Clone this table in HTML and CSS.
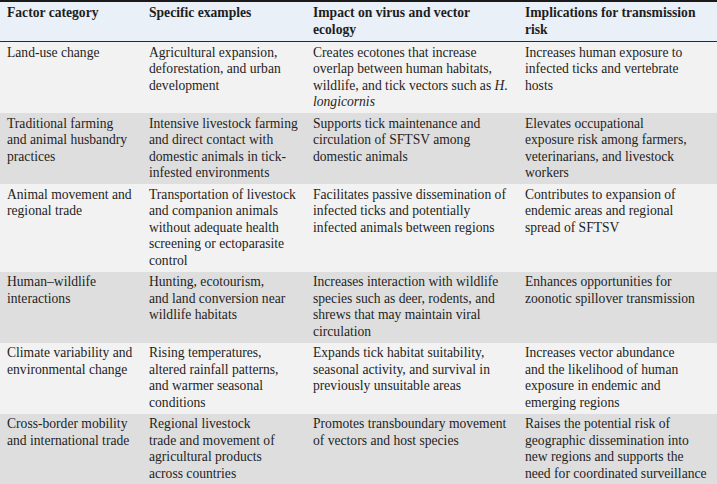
FILE: index.html
```html
<!DOCTYPE html>
<html lang="en">
<head>
<meta charset="utf-8">
<title>Factors</title>
<link rel="stylesheet" href="styles.css">
</head>
<body>
<table class="factors">
  <colgroup>
    <col class="c1"><col class="c2"><col class="c3"><col class="c4">
  </colgroup>
  <thead>
    <tr>
      <th>Factor category</th>
      <th>Specific examples</th>
      <th>Impact on virus and vector ecology</th>
      <th>Implications for transmission risk</th>
    </tr>
  </thead>
  <tbody>
    <tr>
      <td>Land-use change</td>
      <td>Agricultural expansion, deforestation, and urban development</td>
      <td>Creates ecotones that increase overlap between human habitats, wildlife, and tick vectors such as <i>H. longicornis</i></td>
      <td>Increases human exposure to<br>infected ticks and vertebrate<br>hosts</td>
    </tr>
    <tr>
      <td>Traditional farming and animal husbandry practices</td>
      <td>Intensive livestock farming and direct contact with domestic animals in tick-infested environments</td>
      <td>Supports tick maintenance and circulation of SFTSV among domestic animals</td>
      <td>Elevates occupational<br>exposure risk among farmers,<br>veterinarians, and livestock<br>workers</td>
    </tr>
    <tr>
      <td>Animal movement and regional trade</td>
      <td>Transportation of livestock and companion animals without adequate health screening or ectoparasite control</td>
      <td>Facilitates passive dissemination of infected ticks and potentially infected animals between regions</td>
      <td>Contributes to expansion of endemic areas and regional spread of SFTSV</td>
    </tr>
    <tr>
      <td>Human–wildlife interactions</td>
      <td>Hunting, ecotourism,<br>and land conversion near<br>wildlife habitats</td>
      <td>Increases interaction with wildlife species such as deer, rodents, and shrews that may maintain viral circulation</td>
      <td>Enhances opportunities for zoonotic spillover transmission</td>
    </tr>
    <tr>
      <td>Climate variability and environmental change</td>
      <td>Rising temperatures, altered rainfall patterns, and warmer seasonal conditions</td>
      <td>Expands tick habitat suitability, seasonal activity, and survival in previously unsuitable areas</td>
      <td>Increases vector abundance<br>and the likelihood of human<br>exposure in endemic and<br>emerging regions</td>
    </tr>
    <tr>
      <td>Cross-border mobility and international trade</td>
      <td>Regional livestock<br>trade and movement of<br>agricultural products<br>across countries</td>
      <td>Promotes transboundary movement of vectors and host species</td>
      <td>Raises the potential risk of geographic dissemination into new regions and supports the need for coordinated surveillance</td>
    </tr>
  </tbody>
</table>
</body>
</html>
```

FILE: styles.css
```css
html, body {
  margin: 0;
  padding: 0;
  background: #ffffff;
}

.factors {
  width: 717px;
  border-collapse: collapse;
  table-layout: fixed;
  font-family: "Liberation Serif", "Times New Roman", serif;
  font-size: 13.6px;
  line-height: 16.5px;
  color: #1e1e1e;
  border-top: 2px solid #1a1a1a;
  border-bottom: 2px solid #1a1a1a;
}

.c1 { width: 142px; }
.c2 { width: 164px; }
.c3 { width: 212px; }
.c4 { width: 199px; }

.factors th {
  text-align: left;
  vertical-align: top;
  font-weight: bold;
  background: #e9f0f8;
  padding: 3px 7px 3px 7px;
  border-bottom: 1px solid #2a2a2a;
}

.factors td {
  text-align: left;
  vertical-align: top;
  padding: 2.5px 7px 2.5px 7px;
}

.factors tbody tr:nth-child(odd) td {
  background: #f2f2f2;
}

.factors tbody tr:nth-child(even) td {
  background: #dedede;
}
```
